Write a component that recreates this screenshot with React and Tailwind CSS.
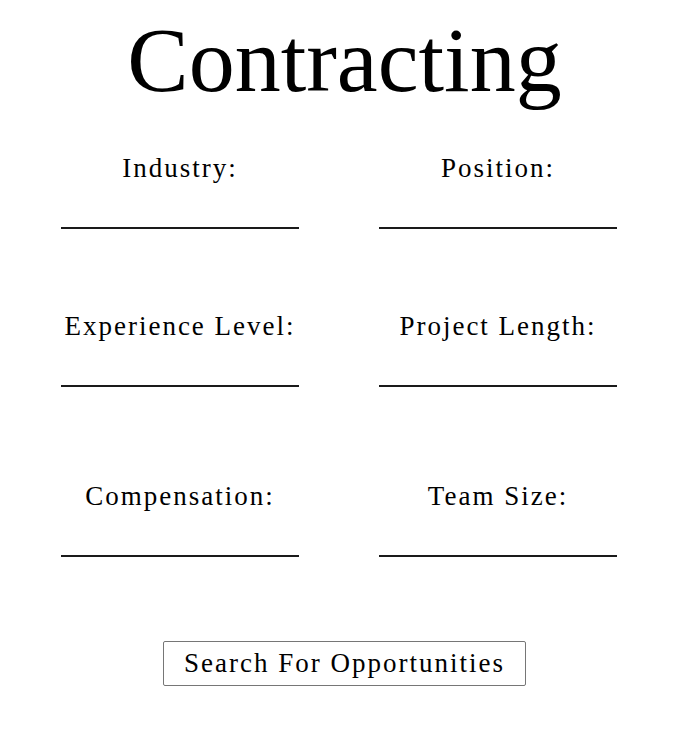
const fields = [
  ["Industry:", "Position:"],
  ["Experience Level:", "Project Length:"],
  ["Compensation:", "Team Size:"],
];

const rowGaps = ["mt-[49px]", "mt-[84px]", "mt-[96px]"];

function Field({ label }) {
  return (
    <div className="flex flex-col items-center">
      <label className="text-[27px] leading-none tracking-[2px] text-black">{label}</label>
      <div className="mt-[45px] h-[2px] w-[238px] bg-[#1a1a1a]" />
    </div>
  );
}

export default function App() {
  return (
    <div className="min-h-[742px] bg-white pt-[14px] text-black" style={{ fontFamily: '"Liberation Serif", serif' }}>
      <h1 className="text-center text-[92px] leading-none">Contracting</h1>

      {fields.map((row, i) => (
        <div key={i} className={`${rowGaps[i]} grid grid-cols-[238px_238px] gap-x-[80px] pl-[61px]`}>
          {row.map((label) => (
            <Field key={label} label={label} />
          ))}
        </div>
      ))}

      <div className="mt-[84px] flex justify-center">
        <button
          type="button"
          className="rounded-[2px] border border-[#767676] bg-white px-[20px] py-[8px] text-[27px] leading-none tracking-[2px] text-black"
        >
          Search For Opportunities
        </button>
      </div>
    </div>
  );
}
